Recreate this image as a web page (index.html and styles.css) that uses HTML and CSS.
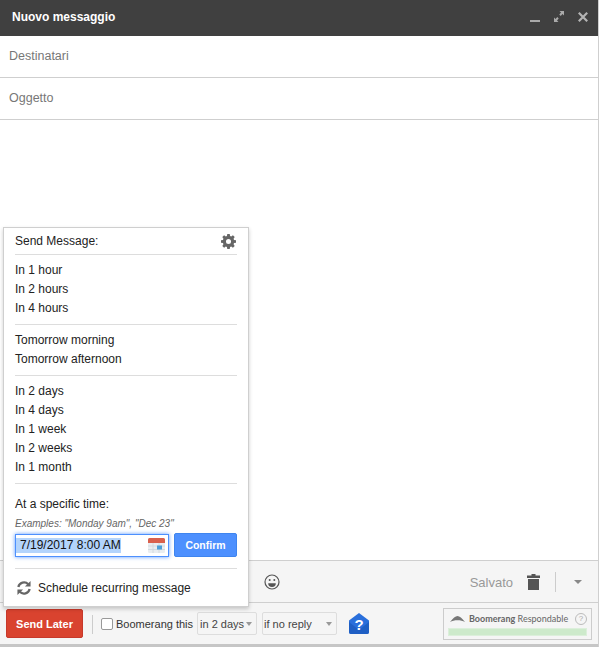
FILE: index.html
```html
<!DOCTYPE html>
<html lang="en">
<head>
  <meta charset="UTF-8">
  <meta name="viewport" content="width=device-width, initial-scale=1.0">
  <title>Nuovo messaggio</title>
  <link rel="stylesheet" href="styles.css">
</head>
<body>
  <div class="compose">
    <!-- Header -->
    <div class="titlebar">
      <span class="title">Nuovo messaggio</span>
      <div class="window-btns">
        <svg width="10" height="10" viewBox="0 0 10 10"><rect y="8" width="10" height="2" fill="#aaa"/></svg>
        <svg width="10" height="11" viewBox="0 0 10 11"><path d="M5.500 0H10v4.500L8.500 3 6.700 4.900 5.300 3.500 7 1.500zM4.500 11H0V6.500L1.500 8l1.800-1.900 1.400 1.400L3 9.500z" fill="#aaa"/></svg>
        <svg width="10" height="10" viewBox="0 0 10 10"><path d="M.8.800l8.400 8.400M9.200.800L.8 9.200" stroke="#b4b4b4" stroke-width="2.200"/></svg>
      </div>
    </div>

    <!-- Fields -->
    <div class="field">Destinatari</div>
    <div class="field">Oggetto</div>
    <div class="body"></div>

    <!-- Toolbar -->
    <div class="toolbar">
      <svg class="smiley" width="16" height="16" viewBox="0 0 16 16"><circle cx="8" cy="8" r="7" fill="none" stroke="#555" stroke-width="1.200"/><circle cx="5.700" cy="6" r="1" fill="#555"/><circle cx="10.300" cy="6" r="1" fill="#555"/><path d="M4.200 9.300h7.600a3.800 3.800 0 0 1-7.600 0z" fill="#555"/></svg>
      <span class="saved">Salvato</span>
      <svg class="trash" width="13" height="16" viewBox="0 0 13 16"><path d="M4.500 0h4v1.500H13V4H0V1.500h4.500zM1 5h11v11H1z" fill="#555"/></svg>
      <span class="tool-sep"></span>
      <span class="caret"></span>
    </div>

    <!-- Boomerang row -->
    <div class="footer">
      <button class="send-later">Send Later</button>
      <span class="foot-sep"></span>
      <label class="boomerang"><span class="checkbox"></span>Boomerang this</label>
      <div class="select days">in 2 days<span class="caret small"></span></div>
      <div class="select reply">if no reply<span class="caret small"></span></div>
      <svg class="help-mail" width="22" height="21" viewBox="0 0 22 21"><path d="M11 0l10 7.500V19a2 2 0 0 1-2 2H3a2 2 0 0 1-2-2V7.500z" fill="#2a6fdb"/><path d="M1 9l10 8 10-8v10a2 2 0 0 1-2 2H3a2 2 0 0 1-2-2z" fill="#1f5fc4"/><text x="11" y="16.500" text-anchor="middle" class="help-mark">?</text></svg>
      <div class="respondable">
        <div class="resp-top">
          <svg width="15" height="6" viewBox="0 0 15 6"><path d="M0 6C3 2 5.500 0 7.500 0s4.500 2 7.500 6C11 3.500 4 3.500 0 6z" fill="#777"/></svg>
          <span class="resp-name"><b>Boomerang</b> Respondable</span>
          <span class="resp-q">?</span>
        </div>
        <div class="resp-bar"></div>
      </div>
    </div>
    <div class="bottom-edge"></div>

    <!-- Send later menu -->
    <div class="popup">
      <div class="popup-head">
        <span>Send Message:</span>
        <svg width="15" height="15" viewBox="0 0 16 16"><path fill="#666" fill-rule="evenodd" d="M6.700 0h2.600l.4 2.100 1.200.5 1.800-1.200 1.900 1.900-1.200 1.800.5 1.200 2.100.4v2.600l-2.100.4-.5 1.200 1.200 1.800-1.900 1.900-1.800-1.200-1.200.5-.4 2.100H6.700l-.4-2.100-1.200-.5-1.800 1.200-1.900-1.900 1.200-1.800-.5-1.200L0 9.300V6.700l2.100-.4.500-1.200-1.200-1.800 1.900-1.900 1.800 1.200 1.200-.5zM8 5.300a2.700 2.700 0 1 0 0 5.400 2.700 2.700 0 0 0 0-5.400z"/></svg>
      </div>
      <ul class="group">
        <li>In 1 hour</li>
        <li>In 2 hours</li>
        <li>In 4 hours</li>
      </ul>
      <ul class="group">
        <li>Tomorrow morning</li>
        <li>Tomorrow afternoon</li>
      </ul>
      <ul class="group">
        <li>In 2 days</li>
        <li>In 4 days</li>
        <li>In 1 week</li>
        <li>In 2 weeks</li>
        <li>In 1 month</li>
      </ul>
      <div class="specific">
        <div class="specific-label">At a specific time:</div>
        <div class="examples">Examples: "Monday 9am", "Dec 23"</div>
        <div class="date-row">
          <div class="date-input">
            <span class="date-value">7/19/2017 8:00 AM</span>
            <svg width="17" height="15" viewBox="0 0 17 15"><rect width="17" height="15" rx="1.500" fill="#e9edf1"/><path d="M0 1.500A1.500 1.500 0 0 1 1.500 0h14A1.500 1.500 0 0 1 17 1.500V5H0z" fill="#d9604c"/><path d="M0 8h17M0 11.500h17M5 5v10M11 5v10" stroke="#cdd5dc" stroke-width=".8"/><rect x="9" y="7.500" width="5" height="4" fill="#4d9fd8"/></svg>
          </div>
          <button class="confirm">Confirm</button>
        </div>
      </div>
      <div class="recurring">
        <svg width="16" height="16" viewBox="0 0 17 17"><path d="M2.500 7.500a6.200 6.200 0 0 1 10.500-3" fill="none" stroke="#666" stroke-width="2.400"/><path d="M15.500 1v6h-6z" fill="#666"/><path d="M14.500 9.500A6.200 6.200 0 0 1 4 12.500" fill="none" stroke="#666" stroke-width="2.400"/><path d="M1.500 16v-6h6z" fill="#666"/></svg>
        <span>Schedule recurring message</span>
      </div>
    </div>
  </div>
</body>
</html>
```

FILE: styles.css
```css
/* General Styling */
html, body {
  margin: 0;
  padding: 0;
}

body {
  background: white;
  font-family: "Liberation Sans", Arial, sans-serif;
  font-size: 12px;
  color: #222;
}

.compose {
  position: relative;
  display: flex;
  flex-direction: column;
  width: 599px;
  height: 647px;
  border-right: 1px solid #cfcfcf;
  box-sizing: border-box;
}

/* Header */
.titlebar {
  display: flex;
  align-items: center;
  justify-content: space-between;
  height: 36px;
  padding: 0 10px 0 12px;
  background: #404040;
  color: white;
  flex: none;
}

.title {
  font-size: 12px;
  font-weight: bold;
  margin-bottom: 2px;
}

.window-btns {
  display: flex;
  align-items: flex-end;
  gap: 14px;
  margin-bottom: 3px;
}

/* Fields */
.field {
  display: flex;
  align-items: center;
  height: 42px;
  box-sizing: border-box;
  padding: 0 9px 2px;
  border-bottom: 1px solid #cfcfcf;
  color: #777;
  font-size: 12.500px;
  flex: none;
}

.body {
  flex: 1;
}

/* Toolbar */
.toolbar {
  display: flex;
  align-items: center;
  height: 43px;
  box-sizing: border-box;
  padding-right: 16px;
  background: #f5f5f5;
  border-top: 1px solid #cfcfcf;
  border-bottom: 1px solid #cfcfcf;
  flex: none;
}

.smiley {
  margin-left: 264px;
}

.saved {
  margin-left: auto;
  margin-top: 1px;
  color: #999;
  font-size: 13px;
}

.trash {
  margin-left: 14px;
}

.tool-sep {
  width: 1px;
  height: 20px;
  margin: 0 18px 0 15px;
  background: #ccc;
}

.caret {
  width: 0;
  height: 0;
  border-left: 4px solid transparent;
  border-right: 4px solid transparent;
  border-top: 4px solid #888;
}

.caret.small {
  margin-left: auto;
  border-left-width: 3.500px;
  border-right-width: 3.500px;
  border-top-color: #999;
}

/* Boomerang row */
.footer {
  display: flex;
  align-items: center;
  height: 41px;
  padding-left: 6px;
  background: #f5f5f5;
  flex: none;
}

.send-later {
  width: 77px;
  height: 29px;
  padding: 0;
  border: 1px solid #c7392b;
  border-radius: 2px;
  background: #d9432f;
  color: white;
  font-family: inherit;
  font-size: 11px;
  font-weight: bold;
}

.foot-sep {
  width: 1px;
  height: 19px;
  margin: 1px 8px 0 9px;
  background: #ccc;
}

.boomerang {
  display: flex;
  align-items: center;
  gap: 3px;
  font-size: 11px;
  color: #333;
}

.checkbox {
  width: 10px;
  height: 10px;
  border: 1px solid #999;
  border-radius: 2px;
  background: white;
}

.select {
  display: flex;
  align-items: center;
  height: 23px;
  box-sizing: border-box;
  padding: 0 4px 0 2px;
  border: 1px solid #ddd;
  border-radius: 2px;
  font-size: 11px;
  color: #444;
  white-space: nowrap;
}

.days {
  width: 60px;
  margin-left: 4px;
}

.reply {
  width: 75px;
  margin-left: 5px;
  padding-left: 1px;
}

.help-mail {
  margin-left: 11px;
}

.help-mark {
  fill: white;
  font-family: "Liberation Sans", Arial, sans-serif;
  font-size: 15px;
  font-weight: bold;
}

.respondable {
  display: flex;
  flex-direction: column;
  justify-content: center;
  gap: 3px;
  width: 149px;
  height: 32px;
  box-sizing: border-box;
  margin: 1px 6px 0 auto;
  padding: 0 4px;
  border: 1px solid #ccc;
}

.resp-top {
  display: flex;
  align-items: center;
  gap: 4px;
  padding-left: 2px;
}

.resp-name {
  font-family: Lato, sans-serif;
  font-size: 9px;
  color: #666;
  white-space: nowrap;
}

.resp-q {
  width: 10px;
  height: 10px;
  margin-left: auto;
  border: 1px solid #bbb;
  border-radius: 50%;
  color: #aaa;
  font-size: 8px;
  line-height: 10px;
  text-align: center;
}

.resp-bar {
  height: 8px;
  background: #cdeacb;
  border: 1px solid #dcefdb;
  box-sizing: border-box;
}

.bottom-edge {
  height: 3px;
  background: #c6c6c6;
  flex: none;
}

/* Send later menu */
.popup {
  position: absolute;
  left: 3px;
  top: 227px;
  width: 246px;
  height: 380px;
  box-sizing: border-box;
  padding: 0 11px;
  background: white;
  border: 1px solid #cfcfcf;
  box-shadow: 0 2px 4px rgba(0, 0, 0, 0.2);
  color: #222;
}

.popup-head {
  display: flex;
  align-items: center;
  justify-content: space-between;
  height: 27px;
  box-sizing: border-box;
  padding-right: 1px;
  border-bottom: 1px solid #ddd;
}

.group {
  margin: 0;
  padding: 6px 0;
  list-style: none;
  border-bottom: 1px solid #ddd;
}

.group li {
  height: 19px;
  line-height: 19px;
}

.specific {
  height: 85px;
  box-sizing: border-box;
  padding-top: 13px;
  border-bottom: 1px solid #ddd;
}

.specific-label {
  line-height: 14px;
}

.examples {
  margin-top: 7px;
  font-size: 10px;
  font-style: italic;
  color: #666;
  line-height: 11px;
}

.date-row {
  display: flex;
  align-items: center;
  gap: 5px;
  margin-top: 4px;
}

.date-input {
  display: flex;
  align-items: center;
  justify-content: space-between;
  width: 154px;
  height: 23px;
  box-sizing: border-box;
  padding: 0 3px 0 0;
  border: 1px solid #4d90fe;
  box-shadow: 0 0 4px rgba(77, 144, 254, 0.9);
  font-size: 12px;
}

.date-value {
  padding-left: 4px;
  background: #b3d4fc;
  color: #111;
  line-height: 15px;
}

.confirm {
  width: 63px;
  height: 24px;
  padding: 0;
  border: 1px solid #3f85ee;
  border-radius: 2px;
  background: #4d90fe;
  color: white;
  font-family: inherit;
  font-size: 10.500px;
  font-weight: bold;
}

.recurring {
  display: flex;
  align-items: center;
  gap: 6px;
  height: 37px;
  padding-left: 1px;
}
```
